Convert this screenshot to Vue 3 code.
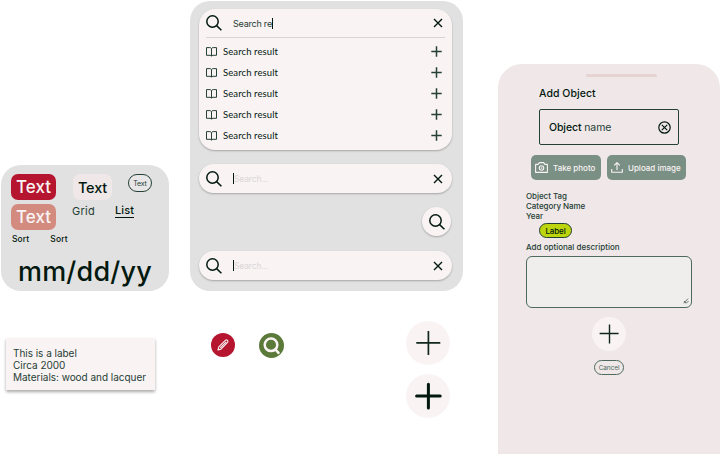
<script setup>
const results = Array.from({ length: 5 }, (_, i) => ({ id: i, label: 'Search result' }))
const tags = ['Object Tag', 'Category Name', 'Year']
</script>

<template>
  <main class="board">
    <section class="left">
      <div class="styles">
        <div class="grid">
          <div class="stack">
            <button class="btn crimson">Text</button>
            <button class="btn salmon">Text</button>
          </div>
          <div class="stack second">
            <button class="btn pale">Text</button>
            <span class="view">Grid</span>
          </div>
          <div class="stack third">
            <button class="pill">Text</button>
            <span class="view active">List</span>
          </div>
        </div>
        <div class="sorts"><span>Sort</span><span class="tinted">Sort</span></div>
        <div class="date">mm/dd/yy</div>
      </div>
      <div class="note">
        <div class="n1">This is a label</div>
        <div class="n2">Circa 2000</div>
        <div class="n3">Materials: wood and lacquer</div>
      </div>
    </section>

    <section class="middle">
      <div class="searches">
        <div class="results">
          <div class="query">
            <svg class="mag" viewBox="0 0 16 16"><circle cx="6.5" cy="6.5" r="5.7" /><path d="M10.6 10.6 15.4 15.2" /></svg>
            <span class="typed">Search re</span><i class="caret"></i>
            <svg class="close" viewBox="0 0 10 10"><path d="M1 1 9 9M9 1 1 9" /></svg>
          </div>
          <div v-for="r in results" :key="r.id" class="result">
            <svg class="book" viewBox="0 0 11 10"><path d="M5.5 1.6C5.2 .9 4.6.6 3.8.6H.5v7.7h3.6c.8 0 1.2.3 1.4.9.2-.6.6-.9 1.4-.9h3.6V.6H7.2c-.8 0-1.4.3-1.7 1v7.6" /></svg>
            <span class="rlabel">{{ r.label }}</span>
            <svg class="add" viewBox="0 0 11 11"><path d="M5.5 .3v10.4M.3 5.5h10.4" /></svg>
          </div>
        </div>
        <div class="bar">
          <svg class="mag" viewBox="0 0 16 16"><circle cx="6.5" cy="6.5" r="5.7" /><path d="M10.6 10.6 15.4 15.2" /></svg>
          <i class="caret"></i><span class="hint">Search...</span>
          <svg class="close" viewBox="0 0 10 10"><path d="M1 1 9 9M9 1 1 9" /></svg>
        </div>
        <button class="round">
          <svg class="mag" viewBox="0 0 16 16"><circle cx="6.5" cy="6.5" r="5.7" /><path d="M10.6 10.6 15.4 15.2" /></svg>
        </button>
        <div class="bar">
          <svg class="mag" viewBox="0 0 16 16"><circle cx="6.5" cy="6.5" r="5.7" /><path d="M10.6 10.6 15.4 15.2" /></svg>
          <i class="caret"></i><span class="hint">Search...</span>
          <svg class="close" viewBox="0 0 10 10"><path d="M1 1 9 9M9 1 1 9" /></svg>
        </div>
      </div>
      <div class="actions">
        <svg class="edit" viewBox="0 0 24 24"><circle cx="12" cy="12" r="12" fill="#b5152f" /><path d="M7 17 7.8 13.8 14.6 7.2Q15.5 6.5 16.5 7.4 17.4 8.4 16.6 9.3L10 16.1ZM9.2 14.8 15.2 8.8" fill="none" stroke="#f9f3f4" stroke-width="1.1" stroke-linejoin="round" /></svg>
        <svg class="find" viewBox="0 0 25 25"><circle cx="12.5" cy="12.5" r="12.5" fill="#5b7938" /><circle cx="12" cy="11.8" r="6.3" fill="none" stroke="#f9f3f4" stroke-width="2.5" /><path d="m16.5 16.5 3 3.4" stroke="#f9f3f4" stroke-width="2.6" stroke-linecap="round" /></svg>
        <div class="pluses">
          <svg viewBox="0 0 44 44"><circle cx="22" cy="22" r="22" fill="#f9f3f4" /><path d="M22.4 10v24M10.3 21.8h24" stroke="#10281e" stroke-width="1.7" /></svg>
          <svg viewBox="0 0 44 44"><circle cx="22" cy="22" r="22" fill="#f9f3f4" /><path d="M22.4 10.3v23.6M10.6 21.9h23.6" stroke="#03190f" stroke-width="3" stroke-linecap="round" /></svg>
        </div>
      </div>
    </section>

    <section class="phone">
      <div class="handle"></div>
      <h1 class="title">Add Object</h1>
      <div class="field">
        <span><b>Object</b> name</span>
        <svg viewBox="0 0 13 13"><circle cx="6.5" cy="6.5" r="5.7" /><path d="m3.8 3.8 5.4 5.4M9.2 3.8 3.8 9.2" /></svg>
      </div>
      <div class="uploads">
        <button class="photo">
          <svg viewBox="0 0 13 11"><path d="M.6 2.4h2.5L4.4.6h4.2l1.3 1.8h2.5v8H.6Z" /><circle cx="6.5" cy="6" r="2.2" /><circle cx="6.5" cy="6" r=".3" /></svg>
          <span>Take photo</span>
        </button>
        <button class="image">
          <svg viewBox="0 0 12 11"><path d="M.7 7v3.3h10.6V7M6 8V.8M3.2 3.4 6 .7l2.8 2.7" /></svg>
          <span>Upload image</span>
        </button>
      </div>
      <div class="tags"><div v-for="t in tags" :key="t">{{ t }}</div></div>
      <span class="chip">Label</span>
      <div class="desc">Add optional description</div>
      <div class="area">
        <svg viewBox="0 0 6 6"><path d="M.5 5.3 5 .7M3 5.5 5.5 3M1 3l2 2" /></svg>
      </div>
      <svg class="plus" viewBox="0 0 34 34"><circle cx="17" cy="17" r="17" fill="#f9f3f4" /><path d="M17.5 7.4v19M7.6 16.5h19" stroke="#10281e" stroke-width="1.4" /></svg>
      <button class="cancel">Cancel</button>
    </section>
  </main>
</template>

<style>
body { background: #fff; overflow: hidden; }
</style>

<style scoped>
* { box-sizing: border-box; }
.board { display: flex; width: 720px; height: 454px; overflow: hidden; font-family: Inter, "Open Sans", sans-serif; color: #03190f; white-space: nowrap; }
button { border: 0; padding: 0; margin: 0; font-family: inherit; color: inherit; display: flex; align-items: center; justify-content: center; }
svg { display: block; flex: none; }
.left { width: 190px; padding: 165px 0 0 1px; }
.styles { width: 168px; height: 126px; border-radius: 20px; background: #e1e1e1; padding: 9px 10px 0; }
.grid { display: flex; height: 56px; }
.stack { display: flex; flex-direction: column; align-items: flex-start; gap: 4px; }
.second { margin-left: 17px; width: 43px; }
.third { width: 40px; }
.btn { width: 45px; height: 26px; border-radius: 7px; font-size: 17px; font-weight: 500; letter-spacing: .05px; color: #f9f3f4; }
.crimson { background: #b5152f; }
.salmon { background: #d38a7f; }
.pale { width: 39px; background: #efe7e8; color: #03190f; font-size: 14.5px; letter-spacing: -.15px; }
.pill { margin-left: 12px; width: 24px; height: 18px; border: 1px solid #254035; border-radius: 9px; font-size: 7px; letter-spacing: -.2px; background: #e8e6e6; color: #254035; }
.view { font-size: 11px; line-height: 15px; color: #254035; letter-spacing: .25px; }
.second .view { margin: 0 0 0 -1px; }
.active { color: #03190f; margin: 8px 0 0 -1px; line-height: 13px; border-bottom: 1.5px solid #03190f; font-weight: 500; font-size: 11px; letter-spacing: .1px; }
.sorts { display: flex; gap: 21px; padding: 3px 0 0 1px; font-size: 8.5px; line-height: 12px; font-weight: 500; letter-spacing: .1px; }
.tinted { background: #e3dfdf; }
.date { padding-left: 7px; margin-top: 9px; font-size: 27px; line-height: 35px; font-weight: 500; letter-spacing: .2px; }
.note { width: 149px; height: 52px; margin: 47px 0 0 5px; padding: 9px 7px 0; background: #f9f3f4; box-shadow: 0 2px 3px #0005; font-size: 10px; line-height: 12.2px; color: #254035; letter-spacing: -.03px; }
.middle { width: 308px; }
.searches { width: 273px; height: 290px; margin-top: 1px; border-radius: 20px; background: #e1e1e1; padding: 8px 11px 0 9px; display: flex; flex-direction: column; }
.results { height: 141px; border-radius: 16px; background: #f9f3f4; box-shadow: 0 1px 2px #0004; padding: 0 7px; }
.query { height: 29px; display: flex; align-items: center; border-bottom: 1.5px solid #d8d3d4; margin-bottom: 3px; }
.mag { width: 16px; height: 16px; fill: none; stroke: #03190f; stroke-width: 1.5; }
.typed { font-size: 9px; margin-left: 11px; color: #254035; letter-spacing: -.22px; }
.caret { width: 1px; height: 11px; background: #03190f; }
.close { width: 10px; height: 10px; margin-left: auto; margin-right: 2px; fill: none; stroke: #03190f; stroke-width: 1.4; }
.result { height: 21px; display: flex; align-items: center; }
.book { width: 11px; height: 10px; fill: none; stroke: #254035; stroke-width: 1; }
.rlabel { font-family: Lato, sans-serif; margin-left: 6px; font-size: 9.5px; letter-spacing: .1px; }
.add { width: 11px; height: 11px; margin-left: auto; margin-right: 3px; stroke: #254035; stroke-width: 1.5; }
.bar { height: 29px; margin-top: 14px; border-radius: 15px; background: #f9f3f4; box-shadow: 0 1px 2px #0004; padding: 0 9px 0 7px; display: flex; align-items: center; }
.bar .caret { margin-left: 11px; }
.bar .close { margin-right: 0; }
.hint { font-size: 8.5px; color: #d9d6d6; letter-spacing: -.15px; }
.round { width: 29px; height: 29px; border-radius: 50%; background: #f9f3f4; box-shadow: 0 1px 2px #0004; align-self: flex-end; margin: 14px 1px 0 0; }
.round + .bar { margin-top: 15px; }
.actions { display: flex; align-items: flex-start; padding: 30px 0 0 21px; }
.edit { width: 24px; height: 24px; margin-top: 12px; }
.find { width: 25px; height: 25px; margin: 12px 0 0 24px; }
.pluses { margin-left: 122px; display: flex; flex-direction: column; gap: 9px; }
.pluses svg { width: 44px; height: 44px; }
.phone { width: 222px; height: 390px; margin-top: 64px; border-radius: 24px 24px 0 0; background: #efe7e8; display: flex; flex-direction: column; align-items: flex-start; padding: 10px 0 0 28px; }
.handle { width: 71px; height: 3px; border-radius: 2px; background: #e7d4d2; margin-left: 60px; }
.title { font-size: 10.5px; line-height: 14px; font-weight: 500; margin: 10px 0 0 13px; letter-spacing: .05px; }
.field { width: 140px; height: 36px; margin: 8px 0 0 13px; border: 1px solid #254035; border-radius: 2px; padding: 1px 7px 0 9px; display: flex; align-items: center; justify-content: space-between; font-size: 10.5px; color: #254035; letter-spacing: -.1px; }
.field b { font-weight: 500; color: #03190f; }
.field svg { width: 13px; height: 13px; fill: none; stroke: #03190f; stroke-width: 1.2; }
.uploads { display: flex; gap: 6px; margin: 10px 0 0 5px; color: #f9f3f4; }
.uploads button { height: 25px; border-radius: 5px; background: #7b9084; font-size: 8px; font-weight: 500; justify-content: flex-start; }
.uploads svg { fill: none; stroke: #f9f3f4; stroke-width: 1.1; stroke-linejoin: round; }
.photo { width: 70px; padding-left: 4px; gap: 5px; }
.photo svg { width: 13px; height: 11px; }
.image { width: 79px; padding-left: 4px; gap: 5px; }
.image svg { width: 12px; height: 11px; }
.tags { margin-top: 11px; font-size: 8px; line-height: 10px; font-weight: 500; color: #254035; letter-spacing: -.05px; }
.chip { margin: 2px 0 0 13px; width: 33px; height: 15px; border: 1px solid #254035; border-radius: 8px; background: #bcd50c; font-size: 8px; line-height: 14px; text-align: center; font-weight: 500; letter-spacing: -.1px; }
.desc { margin-top: 3px; font-size: 8px; line-height: 12px; font-weight: 500; color: #254035; }
.area { width: 166px; height: 52px; margin-top: 3px; border: 1px solid #4d6a5c; border-radius: 6px; background: #efeeec; display: flex; align-items: flex-end; justify-content: flex-end; padding: 3px 2px; }
.area svg { width: 6px; height: 6px; fill: none; stroke: #254035; stroke-width: .7; }
.plus { width: 34px; height: 34px; margin: 9px 0 0 66px; }
.cancel { width: 30px; height: 15px; margin: 9px 0 0 68px; border: 1px solid #4d6a5c; border-radius: 8px; background: #efe7e8; font-size: 6.5px; letter-spacing: -.1px; color: #4d6a5c; }
</style>
